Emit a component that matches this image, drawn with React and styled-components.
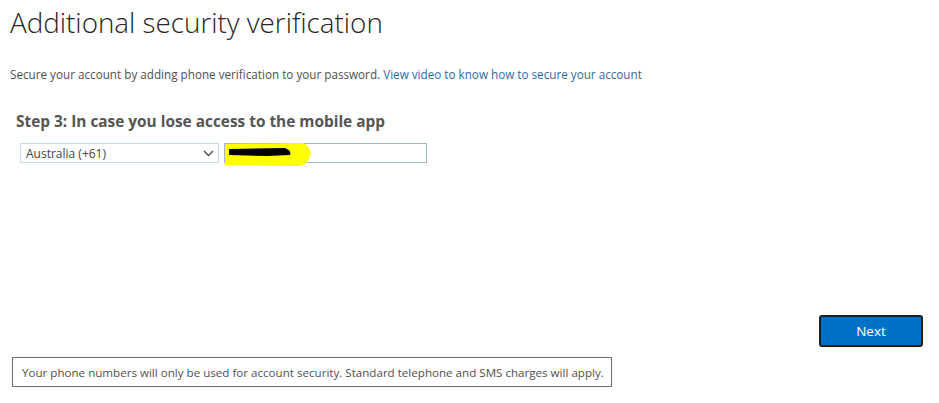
import React from "react";
import styled, { createGlobalStyle } from "styled-components";

const GlobalStyle = createGlobalStyle`
  html, body {
    margin: 0;
    padding: 0;
    background: #ffffff;
  }
  body {
    font-family: "Open Sans", "Liberation Sans", sans-serif;
    color: #444;
  }
`;

const Page = styled.div`
  width: 939px;
  height: 403px;
  display: flex;
  flex-direction: column;
  box-sizing: border-box;
  padding: 0 16px 0 10px;
`;

const Title = styled.h1`
  margin: 3px 0 0;
  font-size: 27.8px;
  font-weight: 300;
  line-height: 38px;
  color: #262626;
`;

const Intro = styled.p`
  margin: 25px 0 0;
  font-size: 11.7px;
  line-height: 16px;
  color: #505050;
`;

const Link = styled.a`
  color: #2f6a9f;
  text-decoration: none;
`;

const Section = styled.div`
  margin-top: 30px;
  padding-left: 6px;
`;

const StepTitle = styled.h2`
  margin: 0;
  font-size: 15.4px;
  font-weight: 700;
  line-height: 20px;
  color: #555;
`;

const Fields = styled.div`
  display: flex;
  gap: 5px;
  margin-top: 11px;
  padding-left: 4px;
`;

const SelectBox = styled.div`
  width: 199px;
  height: 20px;
  box-sizing: border-box;
  border: 1px solid #c9d8e6;
  display: flex;
  align-items: center;
  justify-content: space-between;
  padding: 0 4px 0 5px;
  font-size: 12px;
  color: #444;
`;

const Chevron = styled.svg`
  width: 11px;
  height: 7px;
`;

const PhoneInput = styled.div`
  width: 203px;
  height: 20px;
  box-sizing: border-box;
  border: 1px solid #9fb3c6;
  position: relative;
`;

const Highlight = styled.svg`
  position: absolute;
  left: 0;
  top: -1px;
  width: 88px;
  height: 24px;
`;

const Spacer = styled.div`
  flex: 1;
`;

const Actions = styled.div`
  display: flex;
  justify-content: flex-end;
`;

const NextButton = styled.button`
  width: 104px;
  height: 32px;
  box-sizing: border-box;
  border: 2px solid #1f1f1f;
  border-radius: 3px;
  background: #0072c6;
  color: #fff;
  font-family: "Open Sans", "Liberation Sans", sans-serif;
  font-size: 13.5px;
  font-weight: 400;
  cursor: pointer;
`;

const Notice = styled.div`
  align-self: flex-start;
  margin: 10px 0 16px 2px;
  border: 1px solid #6b6b6b;
  height: 30px;
  box-sizing: border-box;
  padding: 0 7px 0 9px;
  display: flex;
  align-items: center;
  font-size: 11.6px;
  color: #505050;
`;

export default function App() {
  return (
    <>
      <GlobalStyle />
      <Page>
        <Title>Additional security verification</Title>
        <Intro>
          Secure your account by adding phone verification to your password.{" "}
          <Link href="#">View video to know how to secure your account</Link>
        </Intro>
        <Section>
          <StepTitle>Step 3: In case you lose access to the mobile app</StepTitle>
          <Fields>
            <SelectBox>
              <span>Australia (+61)</span>
              <Chevron viewBox="0 0 11 7">
                <path d="M1 1l4.5 4.5L10 1" fill="none" stroke="#555" strokeWidth="1.5" />
              </Chevron>
            </SelectBox>
            <PhoneInput>
              <Highlight viewBox="0 0 88 24">
                <path d="M0 1 L78 0 Q87 4 85 13 Q83 23 72 23 L0 22 Z" fill="#ffff00" />
                <path d="M4 6 L60 5 Q67 8 65 12 L42 13 L4 12 Z" fill="#000" />
              </Highlight>
            </PhoneInput>
          </Fields>
        </Section>
        <Spacer />
        <Actions>
          <NextButton>Next</NextButton>
        </Actions>
        <Notice>
          Your phone numbers will only be used for account security. Standard telephone and SMS charges will apply.
        </Notice>
      </Page>
    </>
  );
}
